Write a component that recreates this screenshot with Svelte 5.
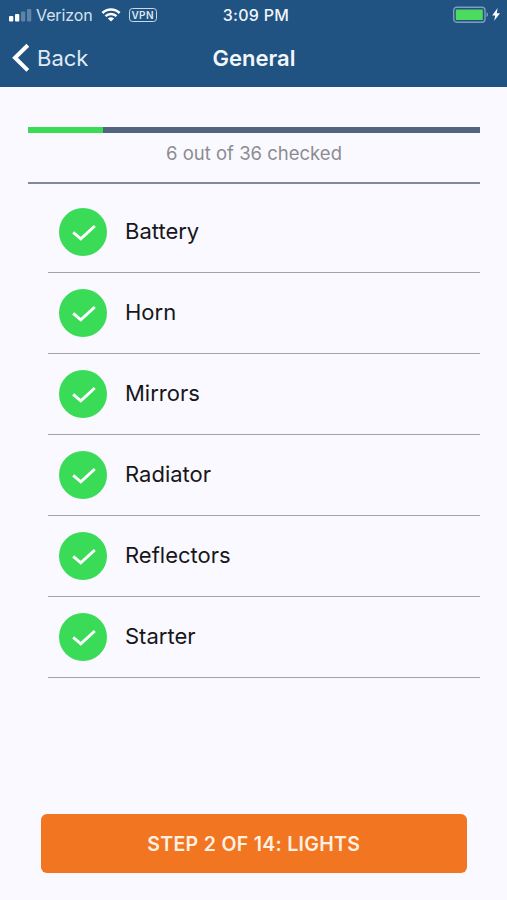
<script>

  // Checklist for the current inspection step
  const items = ['Battery', 'Horn', 'Mirrors', 'Radiator', 'Reflectors', 'Starter']

  const total = 36
  let checked = $state(items.map(() => true))

  let count = $derived(checked.filter(Boolean).length)
  let progress = $derived(count / total * 100)

  function toggle(i) {
    checked[i] = !checked[i]
  }

</script>

<div class="screen">
  <header>
    <div class="status">
      <div class="carrier">
        <svg class="signal" width="24" height="14" viewBox="0 0 24 14">
          <rect x="0" y="8" width="4.3" height="5.5" rx="1" />
          <rect x="6" y="6" width="4.3" height="7.5" rx="1" />
          <rect class="dim" x="12" y="3.5" width="4.3" height="10" rx="1" />
          <rect class="dim" x="18" y="1" width="4.3" height="12.5" rx="1" />
        </svg>
        <span class="name">Verizon</span>
        <svg class="wifi" width="20" height="14" viewBox="0 0 20 14">
          <path d="M1.4 5 C6.2 0.3 13.8 0.3 18.6 5" />
          <path d="M4.5 8.2 C7.6 5.3 12.4 5.3 15.5 8.2" />
          <path class="dot" d="M10 13.6 L6.9 10.5 C8.7 8.9 11.3 8.9 13.1 10.5 Z" />
        </svg>
        <span class="vpn">VPN</span>
      </div>
      <span class="time">3:09 PM</span>
      <div class="power">
        <svg width="48" height="18" viewBox="0 0 48 18">
          <rect class="shell" x="0.7" y="1.2" width="31.3" height="15" rx="3" />
          <rect class="charge" x="2.8" y="3.4" width="27" height="10.6" rx="0.5" />
          <path class="nub" d="M33.5 6.3 C35.6 7.3 35.6 10.1 33.5 11.1 Z" />
          <path class="bolt" d="M44.6 2 L39.2 9.5 H42.2 L41.2 14.7 L47 7.2 H43.8 Z" />
        </svg>
      </div>
    </div>

    <nav>
      <button class="back">
        <svg width="18" height="30" viewBox="0 0 18 30">
          <path d="M15.8 2.2 L3 14.8 L15.8 27.4" />
        </svg>
        <span>Back</span>
      </button>
      <h1>General</h1>
    </nav>
  </header>

  <main>
    <div class="track">
      <div class="fill" style:width="{progress}%"></div>
    </div>
    <p class="count">{count} out of {total} checked</p>

    <ul>
      {#each items as item, i}
        <li>
          <button class="item" onclick={() => toggle(i)}>
            <svg class:off={!checked[i]} width="48" height="48" viewBox="0 0 48 48">
              <circle cx="24" cy="24" r="24" />
              <path d="M14.2 24.4 L21.8 30.8 L35.8 18" />
            </svg>
            <span>{item}</span>
          </button>
        </li>
      {/each}
    </ul>
  </main>

  <button class="next">STEP 2 OF 14: LIGHTS</button>
</div>

<style>

  :global(body) {
    margin: 0;
    background: #faf9ff;
  }

  .screen {
    display: flex;
    flex-direction: column;
    box-sizing: border-box;
    height: 900px;
    padding-bottom: 27px;
    background: #faf9ff;
    color: #17171a;
    font-family: Inter, "Liberation Sans", sans-serif;
  }

  button {
    padding: 0;
    border: 0;
    background: none;
    color: inherit;
    font: inherit;
    text-align: left;
  }

  svg {
    display: block;
    flex: none;
  }

  /* Blue header, status line over the title */
  header {
    box-sizing: border-box;
    height: 87px;
    background: #205282;
    color: #f1f6fb;
  }

  .status, nav {
    display: grid;
    grid-template-columns: 1fr auto 1fr;
    align-items: center;
  }

  .status {
    height: 29px;
    padding: 0 6px 0 9px;
    font-size: 16px;
  }

  .carrier {
    display: flex;
    align-items: center;
  }

  .signal { fill: white; }

  .signal .dim { fill: #5d83a8; }

  .name {
    margin-left: 3px;
    color: #d5e3f0;
    letter-spacing: -0.1px;
  }

  .wifi {
    margin-left: 8px;
    fill: none;
    stroke: white;
    stroke-width: 2.5;
  }

  .wifi .dot {
    fill: white;
    stroke: none;
  }

  .vpn {
    box-sizing: border-box;
    width: 28px;
    height: 14px;
    margin-left: 8px;
    border: 1.5px solid #c9d9e8;
    border-radius: 3.5px;
    color: #dbe7f2;
    font-size: 10px;
    font-weight: 600;
    letter-spacing: 0.4px;
    line-height: 12px;
    text-align: center;
  }

  .time {
    padding-left: 2px;
    font-weight: 500;
    letter-spacing: 0.3px;
  }

  .power {
    justify-self: end;
  }

  .shell {
    fill: none;
    stroke: #7f9dbb;
    stroke-width: 1.4;
  }

  .charge { fill: #4cdb5e; }

  .nub { fill: #7f9dbb; }

  .bolt { fill: white; }

  nav {
    height: 57px;
    padding: 0 11px 0 12px;
    font-size: 22px;
  }

  .back {
    display: flex;
    align-items: center;
    gap: 7px;
    color: #dfeaf5;
  }

  .back path {
    fill: none;
    stroke: white;
    stroke-width: 4;
  }

  h1 {
    margin: 0;
    font-size: 22px;
    font-weight: 600;
  }

  main {
    flex: 1;
    padding: 40px 27px 0 28px;
  }

  .track {
    height: 6px;
    background: #51657f;
  }

  .fill {
    height: 100%;
    background: #39db57;
  }

  .count {
    box-sizing: border-box;
    height: 51px;
    margin: 0;
    padding-top: 8px;
    border-bottom: 2px solid #7b8a9d;
    color: #8c8c8f;
    font-size: 18.5px;
    line-height: 24px;
    text-align: center;
  }

  ul {
    margin: 0;
    padding: 8px 0 0 20px;
    list-style: none;
  }

  li {
    box-sizing: border-box;
    height: 81px;
    border-bottom: 1px solid #a3a3a6;
  }

  .item {
    display: flex;
    align-items: center;
    gap: 18px;
    width: 100%;
    height: 80px;
    padding-left: 11px;
    font-size: 22px;
  }

  .item span {
    padding-bottom: 2px;
  }

  .item circle { fill: #39db57; }

  .item path {
    fill: none;
    stroke: white;
    stroke-width: 3;
  }

  .off circle { fill: #c9c9cf; }

  .next {
    height: 59px;
    margin: 0 40.5px 0 41px;
    border-radius: 6px;
    background: #f27521;
    color: #fff1e2;
    font-size: 19.5px;
    font-weight: 600;
    letter-spacing: 0.3px;
    text-align: center;
  }

</style>
